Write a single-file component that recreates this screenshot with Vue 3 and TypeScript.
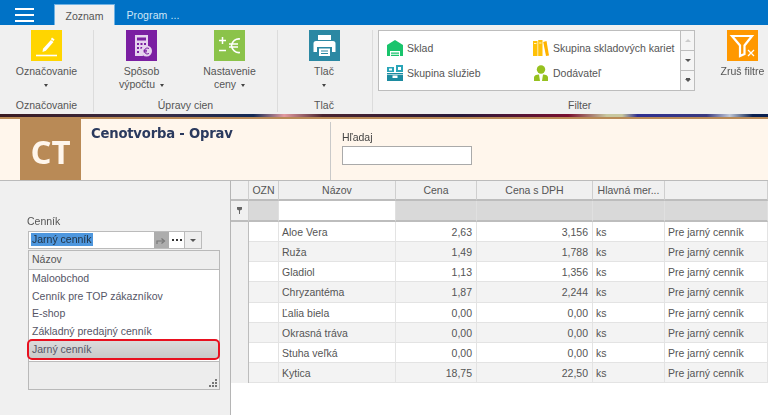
<script setup lang="ts">
type Row = { name: string; price: string; vat: string }

const rows: Row[] = [
  { name: 'Aloe Vera', price: '2,63', vat: '3,156' },
  { name: 'Ruža', price: '1,49', vat: '1,788' },
  { name: 'Gladiol', price: '1,13', vat: '1,356' },
  { name: 'Chryzantéma', price: '1,87', vat: '2,244' },
  { name: 'Ľalia biela', price: '0,00', vat: '0,00' },
  { name: 'Okrasná tráva', price: '0,00', vat: '0,00' },
  { name: 'Stuha veľká', price: '0,00', vat: '0,00' },
  { name: 'Kytica', price: '18,75', vat: '22,50' },
]

const pricelists = ['Maloobchod', 'Cenník pre TOP zákazníkov', 'E-shop', 'Základný predajný cenník']
</script>

<template>
  <div class="app">
    <div class="topbar">
      <div class="burger"><i /><i /><i /></div>
      <div class="tab active">Zoznam</div>
      <div class="tab">Program ...</div>
    </div>

    <div class="ribbon">
      <section class="group g1">
        <div class="btns">
          <div class="btn">
            <div class="ico" style="background:#ffd500">
              <svg viewBox="0 0 31 31" width="31" height="31">
                <path d="M21 7.500l2.600 1.900-1.200 1.700-2.600-1.900zM19.900 10l2.600 1.900-7.700 8.900-3.300 1.200.5-3.300z" fill="#fff" />
                <path d="M5 25.500h21" stroke="#fff" stroke-width="1.600" />
              </svg>
            </div>
            <span>Označovanie</span>
            <b class="caret" />
          </div>
        </div>
        <footer>Označovanie</footer>
      </section>

      <section class="group g2">
        <div class="btns">
          <div class="btn b-calc">
            <div class="ico" style="background:#7b1fa2">
              <svg viewBox="0 0 31 31" width="31" height="31">
                <path d="M9 5h13v12a7 7 0 0 0-5 9H9z" fill="#e6d3ee" />
                <path d="M11 7.500h9v3h-9zM11 13h2v2h-2zM14.500 13h2v2h-2zM18 13h2v2h-2zM11 17h2v2h-2zM14.500 17h2v2h-2zM11 21h2v2h-2z" fill="#7b1fa2" />
                <circle cx="20.500" cy="21" r="5.500" fill="#e6d3ee" />
                <path d="M23 18.500a3 3 0 1 0 0 5M17.500 20.300h3.500M17.500 21.800h3.500" fill="none" stroke="#7b1fa2" stroke-width="1" />
              </svg>
            </div>
            <span>Spôsob<br />výpočtu <b class="caret inline" /></span>
          </div>
          <div class="btn b-set">
            <div class="ico" style="background:#8bc34a">
              <svg viewBox="0 0 31 31" width="31" height="31">
                <path d="M5 10.500h7M8.500 7v7M5 20.500h7" stroke="#fff" stroke-width="1.500" fill="none" />
                <path d="M26 9a7.500 7.500 0 0 0-8.500 6.500A7.500 7.500 0 0 0 26 22.500M15 14h9M15 17h9" stroke="#fff" stroke-width="1.600" fill="none" />
              </svg>
            </div>
            <span>Nastavenie<br />ceny <b class="caret inline" /></span>
          </div>
        </div>
        <footer>Úpravy cien</footer>
      </section>

      <section class="group g3">
        <div class="btns">
          <div class="btn">
            <div class="ico" style="background:#2b88a3">
              <svg viewBox="0 0 31 31" width="31" height="31">
                <path d="M9 5h13v5H9z" fill="#fff" />
                <path d="M7 11h17a2.500 2.500 0 0 1 2.500 2.500V22H23v-5H8v5H4.500v-8.500A2.500 2.500 0 0 1 7 11z" fill="#fff" />
                <path d="M10 18.500h11V26H10z" fill="#fff" />
                <path d="M12 21h7M12 23.500h7" stroke="#2b88a3" stroke-width="1" />
              </svg>
            </div>
            <span>Tlač</span>
            <b class="caret" />
          </div>
        </div>
        <footer>Tlač</footer>
      </section>

      <section class="group g4">
        <div class="gallery">
          <div class="gallery-items">
            <div class="gal-item">
              <svg viewBox="0 0 16 16" width="16" height="16">
                <path d="M8 0l8 5v11h-3v-5H3v5H0V5z" fill="#19c46c" />
                <path d="M4 12.500h8v1.200H4zM4 14.800h8V16H4z" fill="#19c46c" />
              </svg>
              Sklad
            </div>
            <div class="gal-item">
              <svg viewBox="0 0 16 16" width="16" height="16">
                <path d="M0 1h4.500v15H0zM5.200 0h4.300v16H5.200z" fill="#ffc107" />
                <path d="M10.200 2l3.300-1L16 15.500l-3 .5z" fill="#ffb300" />
                <path d="M1 3.500h2.500M6.200 3h2.300" stroke="#fff3c4" stroke-width="1" />
              </svg>
              Skupina skladových kariet
            </div>
            <div class="gal-item">
              <svg viewBox="0 0 16 16" width="16" height="16">
                <path d="M0 8h16v8H0z" fill="#1c8ba0" />
                <path d="M0 2h7v5H0zM9 0h7v7H9z" fill="#2aa5b8" />
                <path d="M2 3.500h3v2H2zM11 2h3v3h-3zM5.500 10.500h5v2.500h-5z" fill="#fff" />
                <path d="M0 9.500h16" stroke="#fff" stroke-width=".6" />
              </svg>
              Skupina služieb
            </div>
            <div class="gal-item">
              <svg viewBox="0 0 16 16" width="16" height="16">
                <circle cx="8" cy="4.500" r="4.200" fill="#96c11f" />
                <path d="M1 16v-3.500C1 10.500 3 9.800 6 9.500l1 6.500zM15 16v-3.500c0-2-2-2.700-5-3L9 16z" fill="#96c11f" />
              </svg>
              Dodávateľ
            </div>
          </div>
          <div class="gal-scroll">
            <span class="s-up" />
            <span class="s-down" />
            <span class="s-more" />
          </div>
        </div>
        <footer>Filter</footer>
      </section>

      <section class="group g5">
        <div class="btn">
          <div class="ico" style="background:#ff9800">
            <svg viewBox="0 0 31 31" width="31" height="31">
              <path d="M5 6h20l-7.500 9.500V24l-4.500 2V15.500z" fill="none" stroke="#fff" stroke-width="2.200" />
              <path d="M21 20l6 6M27 20l-6 6" stroke="#fff" stroke-width="1.300" />
            </svg>
          </div>
          <span>Zruš filtre</span>
        </div>
      </section>
    </div>

    <div class="strip" />

    <header class="head">
      <div class="badge">CT</div>
      <h1>Cenotvorba - Oprav</h1>
      <div class="search">
        <label>Hľadaj</label>
        <div class="search-box" />
      </div>
    </header>

    <main class="body">
      <aside class="side">
        <div class="side-label">Cenník</div>
        <div class="combo">
          <div class="combo-input"><span class="sel">Jarný cenník</span></div>
          <div class="combo-go">
            <svg viewBox="0 0 11 9" width="11" height="9">
              <path d="M1 8V5h6M5.500 2.500L8.500 5 5.500 7.500" fill="none" stroke="#777" stroke-width="1.200" />
            </svg>
          </div>
          <div class="combo-dots"><i /><i /><i /></div>
          <div class="combo-arrow"><b class="caret dark" /></div>
        </div>
        <div class="popup">
          <div class="popup-head">Názov</div>
          <div class="popup-list">
            <div v-for="p in pricelists" :key="p" class="popup-row">{{ p }}</div>
            <div class="popup-row picked">Jarný cenník</div>
          </div>
          <div class="popup-foot">
            <svg class="grip" viewBox="0 0 10 10" width="10" height="10">
              <path d="M7 1h2v2H7zM4 4h2v2H4zM7 4h2v2H7zM1 7h2v2H1zM4 7h2v2H4zM7 7h2v2H7z" fill="#777" />
            </svg>
          </div>
        </div>
      </aside>

      <div class="grid-wrap">
        <div class="grid">
          <div class="hd" />
          <div class="hd">OZN</div>
          <div class="hd">Názov</div>
          <div class="hd">Cena</div>
          <div class="hd">Cena s DPH</div>
          <div class="hd">Hlavná mer...</div>
          <div class="hd" />

          <div class="hd flt-ind">
            <svg viewBox="0 0 5 7" width="5" height="7">
              <path d="M0 0h5v2.500L3 3.500V7H2V3.500L0 2.500z" fill="#666" />
            </svg>
          </div>
          <div class="flt" />
          <div class="flt white" />
          <div class="flt" />
          <div class="flt" />
          <div class="flt" />
          <div class="flt" />

          <template v-for="(r, i) in rows" :key="r.name">
            <div class="ind" />
            <div class="td" :class="{ alt: i % 2 === 1 }" />
            <div class="td" :class="{ alt: i % 2 === 1 }">{{ r.name }}</div>
            <div class="td num" :class="{ alt: i % 2 === 1 }">{{ r.price }}</div>
            <div class="td num" :class="{ alt: i % 2 === 1 }">{{ r.vat }}</div>
            <div class="td" :class="{ alt: i % 2 === 1 }">ks</div>
            <div class="td" :class="{ alt: i % 2 === 1 }">Pre jarný cenník</div>
          </template>
        </div>
      </div>
    </main>
  </div>
</template>

<style>
html, body { margin: 0; background: #fff; overflow: hidden; }
</style>

<style scoped>
.app {
  width: 768px;
  height: 415px;
  overflow: hidden;
  font-family: "Liberation Sans", Arial, sans-serif;
  font-size: 10.500px;
  color: #555;
  display: flex;
  flex-direction: column;
  filter: blur(0.45px);
}

.topbar {
  height: 25px;
  flex: none;
  background: #0072c6;
  display: flex;
  align-items: flex-end;
  box-sizing: border-box;
  padding-left: 15px;
}
.burger {
  width: 19px;
  align-self: flex-start;
  margin-top: 8px;
  margin-right: 20px;
  display: flex;
  flex-direction: column;
  gap: 4px;
}
.burger i { height: 2px; background: #fff; }
.tab {
  height: 21px;
  line-height: 23px;
  width: 61px;
  text-align: center;
  color: #cfe6f7;
  box-sizing: border-box;
  white-space: nowrap;
}
.tab + .tab { width: 66px; margin-left: 5px; letter-spacing: 0.1px; }
.tab.active { background: #f0f0f0; color: #555; border: 1px solid #6fb2e4; border-bottom: 0; }

.ribbon {
  height: 89px;
  flex: none;
  background: #f0f0f0;
  display: flex;
}
.group {
  box-sizing: border-box;
  height: 82px;
  margin-top: 5px;
  border-right: 1px solid #dcdcdc;
  display: flex;
  flex-direction: column;
  align-items: center;
}
.group footer { height: 17px; line-height: 17px; margin-top: auto; margin-bottom: -2px; }
.g1 { width: 94px; }
.g2 { width: 184px; }
.g3 { width: 95px; padding-right: 2px; }
.g4 { width: 345px; border-right: 0; padding-left: 5px; align-items: flex-start; }
.g4 footer { margin-left: 190px; }
.g5 { border-right: 0; width: 49px; }
.btns { display: flex; }
.btn {
  display: flex;
  flex-direction: column;
  align-items: center;
  text-align: center;
  line-height: 13px;
  white-space: nowrap;
}
.btn > span { margin-top: 4px; }
.b-calc { width: 70px; margin-right: 18px; }
.b-set { width: 70px; }
.ico { width: 31px; height: 31px; }
.ico svg { display: block; }
.caret {
  display: block;
  width: 0;
  height: 0;
  border: 2.500px solid transparent;
  border-top: 3px solid #444;
  border-bottom: 0;
  margin-top: 6px;
}
.caret.inline { display: inline-block; vertical-align: middle; margin: 0 0 0 2px; }
.caret.dark { margin: 0; border-top-color: #555; border-width: 3.500px; border-bottom: 0; }

.gallery {
  width: 317px;
  height: 61px;
  box-sizing: border-box;
  border: 1px solid #bdbdbd;
  background: #fff;
  display: flex;
}
.gallery-items {
  flex: 1;
  display: grid;
  grid-template-columns: 146px 1fr;
  grid-auto-rows: 25px;
  padding: 4px 0 0 8px;
}
.gal-item { display: flex; align-items: center; gap: 4px; white-space: nowrap; }
.gal-scroll {
  width: 13px;
  border-left: 1px solid #bdbdbd;
  display: flex;
  flex-direction: column;
}
.gal-scroll span {
  flex: 1;
  display: flex;
  align-items: center;
  justify-content: center;
  background: #f5f5f5;
}
.gal-scroll span + span { border-top: 1px solid #bdbdbd; }
.gal-scroll span::after {
  content: "";
  border: 3px solid transparent;
  border-bottom: 0;
  border-top: 3px solid #555;
}
.gal-scroll .s-up::after { border-top: 0; border-bottom: 3px solid #ccc; }
.gal-scroll .s-more::after { box-shadow: 0 -2px 0 -1px #555; }

.strip {
  height: 3px;
  flex: none;
  background: linear-gradient(90deg, #3a1a22 0, #3a2d45 20%, #152a55 33%, #e39aa0 37%, #4a2430 42%, #2a1a3a 60%, #7a1030 74%, #c8c8a0 79%, #c8c8a0 81%, #303090 83%, #3a3a80 92%, #c0c8d8 95%, #0a2050 98%);
}

.head {
  height: 63px;
  flex: none;
  background: #fff6ec;
  border-top: 2px solid #b98a56;
  display: flex;
  box-sizing: border-box;
  padding-left: 20px;
}
.badge {
  width: 61px;
  background: #b98a56;
  color: #fff6ec;
  font: bold 33px/65px "Open Sans", "Liberation Sans", sans-serif;
  text-align: center;
  flex: none;
}
.head h1 {
  margin: 6px 0 0 10px;
  width: 239px;
  flex: none;
  font: bold 13.200px/18px "DejaVu Sans", sans-serif;
  letter-spacing: -0.2px;
  color: #2b3a5e;
  white-space: nowrap;
}
.search {
  flex: 1;
  margin-top: 3px;
  border-left: 1px solid #c9c9c9;
  padding-left: 11px;
}
.search label { display: block; margin-top: 9px; line-height: 13px; color: #444; }
.search-box {
  width: 130px;
  height: 19px;
  margin-top: 2px;
  background: #fff;
  border: 1px solid #aaa;
  box-sizing: border-box;
}

.body { flex: 1; display: flex; min-height: 0; }
.side {
  width: 231px;
  flex: none;
  box-sizing: border-box;
  background: #f0f0f0;
  border-top: 1px solid #bbb;
  border-right: 1px solid #b5b5b5;
  padding: 34px 0 0 27px;
}
.side-label { line-height: 13px; margin-bottom: 3px; }
.combo {
  width: 174px;
  height: 18px;
  margin-left: 1px;
  display: flex;
  box-sizing: border-box;
  border: 1px solid #bbb;
  background: #fff;
}
.combo-input { flex: 1; line-height: 15px; padding-left: 2px; color: #445; }
.sel { background: #4e97de; color: #234; display: inline-block; line-height: 13px; margin-top: 1px; padding: 0 1px; }
.combo-go {
  width: 15px;
  background: #adadad;
  display: flex;
  align-items: center;
  justify-content: center;
}
.combo-dots {
  width: 15px;
  display: flex;
  align-items: center;
  justify-content: center;
  gap: 2px;
}
.combo-dots i { width: 2px; height: 2px; background: #333; }
.combo-arrow {
  width: 16px;
  background: #eee;
  border-left: 1px solid #bbb;
  display: flex;
  align-items: center;
  justify-content: center;
}
.popup {
  width: 192px;
  height: 140px;
  margin: 1px 0 0 1px;
  box-sizing: border-box;
  border: 1px solid #b9b9b9;
  background: #ededed;
  display: flex;
  flex-direction: column;
}
.popup-head { height: 18px; line-height: 17px; padding-left: 3px; border-bottom: 1px solid #bbb; background: #eee; flex: none; }
.popup-list { height: 92px; background: #fff; border-bottom: 1px solid #bbb; box-sizing: border-box; flex: none; }
.popup-row { height: 17.500px; line-height: 17.500px; padding-left: 3px; color: #556; white-space: nowrap; }
.picked {
  background: linear-gradient(#dcdcdc, #c8c8c8);
  outline: 2px solid #e8101f;
  outline-offset: -1px;
  border-radius: 4px;
  margin-left: -1px;
  padding-left: 4px;
  height: 19px;
  line-height: 18px;
  position: relative;
}
.popup-foot { flex: 1; position: relative; }
.grip { position: absolute; right: 1px; bottom: 1px; }

.grid-wrap { flex: 1; background: #fff; border-top: 1px solid #bbb; }
.grid {
  display: grid;
  grid-template-columns: 18px 30px 117px 81px 116px 72px 103px;
  grid-template-rows: 20px 21px repeat(8, 20.150px);
}
.hd {
  background: #f0f0f0;
  border-right: 1px solid #cfcfcf;
  border-bottom: 2px solid #bdbdbd;
  line-height: 18px;
  text-align: center;
  white-space: nowrap;
  overflow: hidden;
  box-sizing: border-box;
}
.flt-ind { display: flex; align-items: center; justify-content: center; }
.flt { background: #d9d9d9; border-bottom: 2px solid #bdbdbd; border-right: 1px solid #e0e0e0; box-sizing: border-box; }
.flt.white { background: #fff; }
.ind { background: #f0f0f0; border-right: 1px solid #bdbdbd; box-sizing: border-box; }
.td {
  background: #fff;
  border-right: 1px solid #e3e3e3;
  border-bottom: 1px solid #e3e3e3;
  box-sizing: border-box;
  padding: 0 3px;
  line-height: 20px;
  white-space: nowrap;
  overflow: hidden;
}
.td.alt { background: #f3f3f3; }
.num { text-align: right; padding-right: 4px; }
</style>
